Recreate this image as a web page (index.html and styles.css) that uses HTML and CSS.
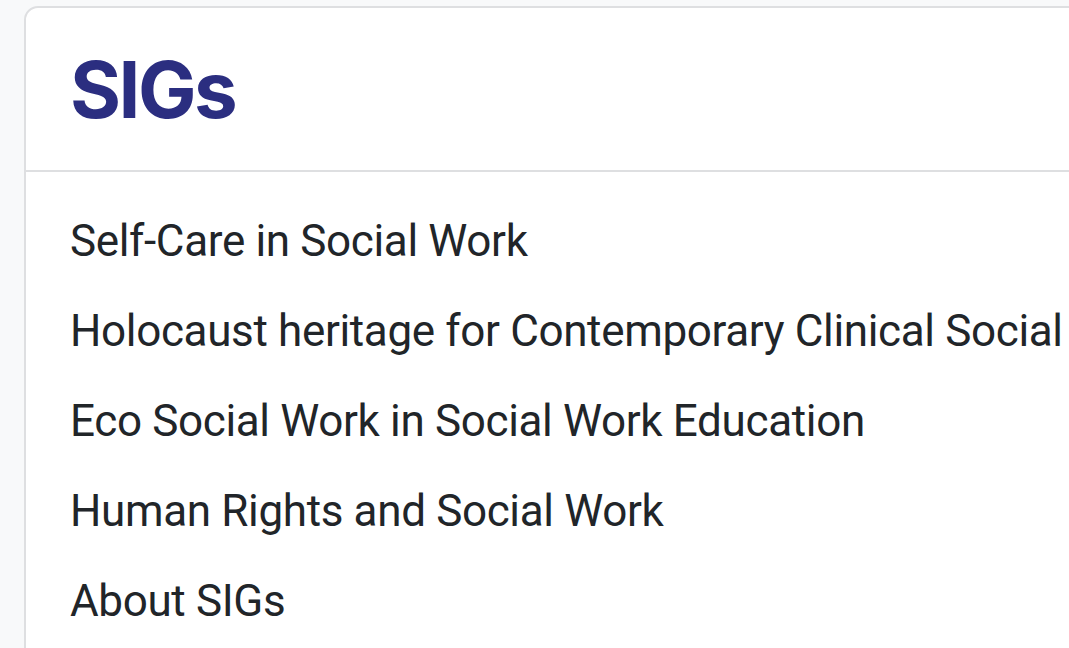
FILE: index.html
```html
<!DOCTYPE html>
<html lang="en">
<head>
    <meta charset="UTF-8">
    <meta name="viewport" content="width=device-width, initial-scale=1.0">
    <title>SIGs</title>
    <link rel="stylesheet" href="styles.css">
</head>
<body>
    <div class="card">
        <div class="card-header">
            <h2>SIGs</h2>
        </div>
        <ul class="sig-list">
            <li><a href="#">Self-Care in Social Work</a></li>
            <li><a href="#">Holocaust heritage for Contemporary Clinical Social Work</a></li>
            <li><a href="#">Eco Social Work in Social Work Education</a></li>
            <li><a href="#">Human Rights and Social Work</a></li>
            <li><a href="#">About SIGs</a></li>
        </ul>
    </div>
</body>
</html>
```

FILE: styles.css
```css
html, body {
    margin: 0;
    height: 100%;
    overflow: hidden;
}
body {
    font-family: Roboto, 'Noto Sans', sans-serif;
    background: #f8f9fa;
    padding: 6px 0 0 24px;
}
.card {
    width: 1200px;
    min-height: 700px;
    background: white;
    border: 2px solid #dedfe1;
    border-radius: 14px;
}
.card-header {
    padding: 0 44px;
    height: 162px;
    display: flex;
    align-items: center;
    border-bottom: 2px solid #dedfe1;
}
.card-header h2 {
    margin: 0;
    font-family: Inter, sans-serif;
    font-size: 78px;
    font-weight: 700;
    color: #2b2e80;
    letter-spacing: -2.5px;
}
.sig-list {
    list-style: none;
    margin: 0;
    padding: 24px 44px 0;
}
.sig-list li {
    height: 90px;
    display: flex;
    align-items: center;
}
.sig-list a {
    font-size: 44px;
    color: #212529;
    text-decoration: none;
    white-space: nowrap;
    letter-spacing: -0.35px;
}
```
